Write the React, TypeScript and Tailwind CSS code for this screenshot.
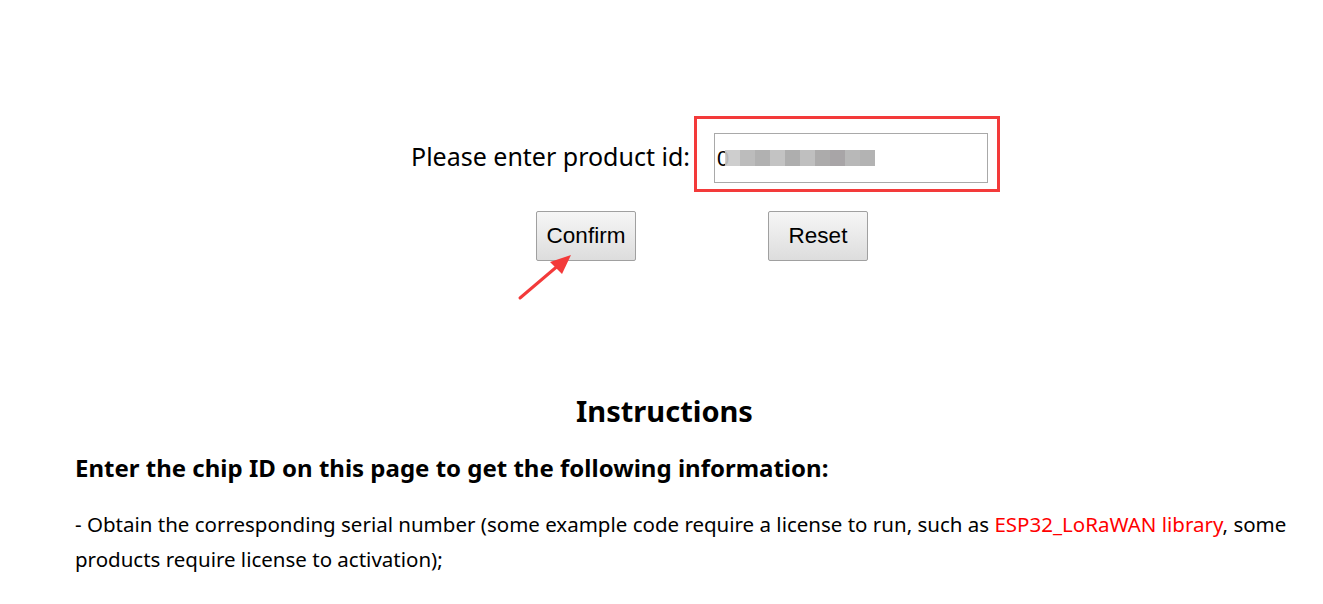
import React from 'react';

const mosaic = ['#c9c9c9', '#b5b5b5', '#a9a9a9', '#bdbdbd', '#a6a6a6', '#b9b9b9', '#a4a2a2', '#9f9c9e', '#b1b1b1', '#ababab'];

const ArrowMark = () => (
  <svg className="absolute left-[516px] top-[250px]" width="60" height="52" viewBox="0 0 60 52">
    <line x1="4" y1="48" x2="44" y2="14" stroke="#f33a3a" strokeWidth="3" strokeLinecap="round" />
    <polygon points="55,5 34,12 46,24" fill="#f33a3a" />
  </svg>
);

export default function App() {
  return (
    <div className="relative min-h-screen bg-white text-black" style={{ fontFamily: '"Noto Sans", "Open Sans", sans-serif' }}>
      {/* Product id form */}
      <div className="pt-[116px] pl-[411px] flex items-center">
        <label className="text-[25px] leading-none mr-[4px] mt-[4px]">Please enter product id:</label>
        <div className="border-[3px] border-[#f33a3a] pl-[17px] pr-[9px] pt-[14px] pb-[6px]">
          <div className="relative w-[274px] h-[50px] border border-[#a9a9a9] bg-white flex items-center pl-[2px]">
            <span className="text-[22px] text-black" style={{ fontFamily: '"Liberation Sans", Arial, sans-serif' }}>0</span>
            <div className="flex h-[16px] -ml-[4px] opacity-90">
              {mosaic.map((c, i) => (
                <div key={i} className="w-[15px] h-full" style={{ background: c }} />
              ))}
            </div>
          </div>
        </div>
      </div>

      <div className="flex pl-[536px] gap-[132px] mt-[19px]" style={{ fontFamily: '"Liberation Sans", Arial, sans-serif' }}>
        <button className="w-[100px] h-[50px] border border-[#a0a0a0] rounded-[2px] bg-gradient-to-b from-[#f6f6f6] to-[#dddddd] text-[22.5px] text-black">Confirm</button>
        <button className="w-[100px] h-[50px] border border-[#a0a0a0] rounded-[2px] bg-gradient-to-b from-[#f6f6f6] to-[#dddddd] text-[22.5px] text-black">Reset</button>
      </div>

      <ArrowMark />

      {/* Instructions */}
      <h2 className="mt-[135px] pl-[6px] text-center text-[29px] font-bold leading-none">Instructions</h2>
      <div className="pl-[75px] pr-[30px]">
        <h3 className="mt-[31px] text-[24px] font-bold leading-none">Enter the chip ID on this page to get the following information:</h3>
        <p className="mt-[27px] text-[20.5px] leading-[35px]">
          - Obtain the corresponding serial number (some example code require a license to run, such as{' '}
          <span className="text-[#ff0000]">ESP32_LoRaWAN library</span>, some products require license to activation);
        </p>
      </div>
    </div>
  );
}
